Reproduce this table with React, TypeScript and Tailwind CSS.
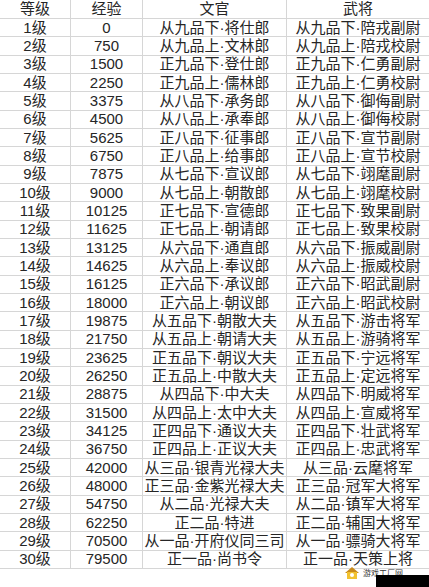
import React from "react";

type Row = [string, string, string, string];

const rows: Row[] = [
  ["1级", "0", "从九品下·将仕郎", "从九品下·陪戎副尉"],
  ["2级", "750", "从九品上·文林郎", "从九品上·陪戎校尉"],
  ["3级", "1500", "正九品下·登仕郎", "正九品下·仁勇副尉"],
  ["4级", "2250", "正九品上·儒林郎", "正九品上·仁勇校尉"],
  ["5级", "3375", "从八品下·承务郎", "从八品下·御侮副尉"],
  ["6级", "4500", "从八品上·承奉郎", "从八品上·御侮校尉"],
  ["7级", "5625", "正八品下·征事郎", "正八品下·宣节副尉"],
  ["8级", "6750", "正八品上·给事郎", "正八品上·宣节校尉"],
  ["9级", "7875", "从七品下·宣议郎", "从七品下·翊麾副尉"],
  ["10级", "9000", "从七品上·朝散郎", "从七品上·翊麾校尉"],
  ["11级", "10125", "正七品下·宣德郎", "正七品下·致果副尉"],
  ["12级", "11625", "正七品上·朝请郎", "正七品上·致果校尉"],
  ["13级", "13125", "从六品下·通直郎", "从六品下·振威副尉"],
  ["14级", "14625", "从六品上·奉议郎", "从六品上·振威校尉"],
  ["15级", "16125", "正六品下·承议郎", "正六品下·昭武副尉"],
  ["16级", "18000", "正六品上·朝议郎", "正六品上·昭武校尉"],
  ["17级", "19875", "从五品下·朝散大夫", "从五品下·游击将军"],
  ["18级", "21750", "从五品上·朝请大夫", "从五品上·游骑将军"],
  ["19级", "23625", "正五品下·朝议大夫", "正五品下·宁远将军"],
  ["20级", "26250", "正五品上·中散大夫", "正五品上·定远将军"],
  ["21级", "28875", "从四品下·中大夫", "从四品下·明威将军"],
  ["22级", "31500", "从四品上·太中大夫", "从四品上·宣威将军"],
  ["23级", "34125", "正四品下·通议大夫", "正四品下·壮武将军"],
  ["24级", "36750", "正四品上·正议大夫", "正四品上·忠武将军"],
  ["25级", "42000", "从三品·银青光禄大夫", "从三品·云麾将军"],
  ["26级", "48000", "正三品·金紫光禄大夫", "正三品·冠军大将军"],
  ["27级", "54750", "从二品·光禄大夫", "从二品·镇军大将军"],
  ["28级", "62250", "正二品·特进", "正二品·辅国大将军"],
  ["29级", "70500", "从一品·开府仪同三司", "从一品·骠骑大将军"],
  ["30级", "79500", "正一品·尚书令", "正一品·天策上将"],
];

const cell =
  "flex items-center justify-center border-r border-b border-[#d6d6d6] whitespace-nowrap leading-[16px]";

const TableRow = ({ data, header }: { data: Row; header?: boolean }) => (
  <div
    className={`grid grid-cols-[71px_72px_144px_142px] ${
      header ? "h-[19px]" : "h-[18.34px]"
    }`}
  >
    {data.map((text, i) => (
      <div key={i} className={`${cell} ${i === 3 ? "border-r-0" : ""}`}>
        {text}
      </div>
    ))}
  </div>
);

const App = () => {
  return (
    <div
      className="relative w-[429px] h-[587px] overflow-hidden bg-white text-[15px] text-[#262626]"
      style={{
        fontFamily: '"Liberation Sans", "Noto Sans CJK SC", sans-serif',
      }}
    >
      <TableRow data={["等级", "经验", "文官", "武将"]} header />
      {rows.map((row) => (
        <TableRow key={row[0]} data={row} />
      ))}

      {/* watermark */}
      <div className="absolute left-[344px] top-[566px] flex items-center gap-[2px]">
        <svg width="16" height="14" viewBox="0 0 16 14">
          <path d="M1 7 L8 1 L15 7 Z" fill="#c98a1a" />
          <rect x="3" y="6" width="10" height="7" fill="#f2c230" />
          <circle cx="8" cy="9" r="2" fill="#fff" />
        </svg>
        <span className="bg-white/80 px-[1px] text-[8px] leading-[9px] text-[#333]">
          游戏工厂网
        </span>
      </div>
      <div className="absolute left-[376px] top-[575px] h-[12px] w-[53px] bg-black" />
    </div>
  );
};

export default App;
